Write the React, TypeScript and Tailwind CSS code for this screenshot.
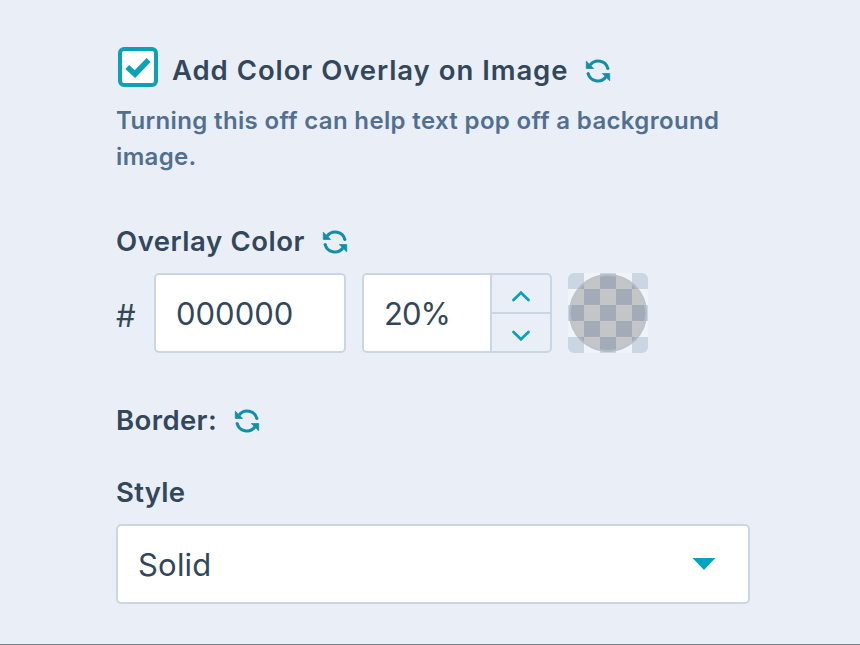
import React, { useState } from "react";

const RefreshIcon: React.FC = () => (
  <svg className="h-[26px] w-[26px] shrink-0 text-[#138fa5]" viewBox="0 0 26 26" fill="none">
    <path d="M5.2 7A10 10 0 0 1 22.9 10.6" stroke="currentColor" strokeWidth={3} />
    <path d="M20.8 19A10 10 0 0 1 3.1 15.4" stroke="currentColor" strokeWidth={3} />
    <circle cx="22.9" cy="10.4" r="1.5" fill="currentColor" />
    <circle cx="3.1" cy="15.6" r="1.5" fill="currentColor" />
    <path d="M1.3 3.2V10.4H8.6Z" fill="currentColor" stroke="currentColor" strokeWidth={0.8} strokeLinejoin="round" />
    <path d="M24.7 22.8V15.6H17.4Z" fill="currentColor" stroke="currentColor" strokeWidth={0.8} strokeLinejoin="round" />
  </svg>
);

interface FieldLabelProps {
  children: React.ReactNode;
  className?: string;
  resettable?: boolean;
}

const FieldLabel: React.FC<FieldLabelProps> = ({ children, className = "", resettable = true }) => (
  <div className={`flex h-9 items-center text-[27.5px] leading-9 font-semibold ${className}`}>
    <span className="tracking-[0.3px]">{children}</span>
    {resettable && (
      <button type="button" aria-label="Reset" className="mt-0.5 ml-[17px]">
        <RefreshIcon />
      </button>
    )}
  </div>
);

// Checkerboard swatch with the translucent overlay colour on top
const ColorSwatch: React.FC = () => (
  <div className="relative ml-4 h-20 w-20 overflow-hidden rounded-md">
    <div className="grid grid-cols-5">
      {Array.from({ length: 25 }, (_, i) => (
        <span key={i} className={`h-4 ${i % 2 === 0 ? "bg-[#cbd6e2]" : "bg-[#f0f4f9]"}`} />
      ))}
    </div>
    <div className="absolute inset-0 grid grid-cols-5 [clip-path:circle(39px)]">
      {Array.from({ length: 25 }, (_, i) => (
        <span key={i} className={`h-4 ${i % 2 === 0 ? "bg-[#a2abb7]" : "bg-[#c3c5c7]"}`} />
      ))}
    </div>
    <div className="absolute inset-px rounded-full border-2 border-[#b9c3ce]/70" />
  </div>
);

export default function App() {
  const [checked, setChecked] = useState(true);
  const [opacity, setOpacity] = useState(20);

  return (
    <div className="h-[645px] w-[860px] overflow-hidden border-b border-[#777f88] bg-[#eaeff7] pl-[116px] font-['Inter',sans-serif] text-[#33475b]">
      <div className="flex pt-[47px]">
        <button
          type="button"
          role="checkbox"
          aria-checked={checked}
          aria-label="Add Color Overlay on Image"
          onClick={() => setChecked(!checked)}
          className="ml-0.5 flex h-10 w-10 items-center justify-center rounded-[6px] border-4 border-[#0ba2b8] bg-white"
        >
          {checked && (
            <svg className="h-[22px] w-[26px] shrink-0" viewBox="0 0 26 22" fill="none">
              <path d="M2.2 11L10 18L23.6 4" stroke="#0ba2b8" strokeWidth={5.6} />
            </svg>
          )}
        </button>
        <FieldLabel className="mt-[5px] ml-[14px]">
          <span className="tracking-[0.9px] [word-spacing:0.3px]">Add Color Overlay on Image</span>
        </FieldLabel>
      </div>
      <p className="mt-[15px] w-[633px] text-[24px] leading-9 font-semibold tracking-[0.35px] text-[#516f90]">
        Turning this off can help text pop off a background image.
      </p>

      <FieldLabel className="mt-12">
        <span className="tracking-[0.5px] [word-spacing:0.5px]">Overlay Color</span>
      </FieldLabel>
      <div className="mt-[14px] flex h-20 items-center text-[31px]">
        <span className="w-[38px] pt-1.5 text-[31px]">#</span>
        <div className="flex h-20 w-48 items-center rounded-[5px] border-2 border-[#cbd6e2] bg-white pt-[3px] pl-5">
          000000
        </div>
        <div className="ml-4 flex h-20 w-[190px] overflow-hidden rounded-[5px] border-2 border-[#cbd6e2]">
          <div className="flex w-[126px] items-center bg-white pt-[3px] pl-5 tracking-[-1px]">{opacity}%</div>
          <div className="flex flex-1 flex-col border-l-2 border-[#cbd6e2]">
            <button
              type="button"
              aria-label="Increase opacity"
              onClick={() => setOpacity(Math.min(100, opacity + 1))}
              className="flex flex-1 items-center justify-center border-b-2 border-[#cbd6e2]"
            >
              <svg className="mt-1 h-3 w-5" viewBox="0 0 20 12" fill="none">
                <path d="M2.5 10L10 2.7L17.5 10" stroke="#0ba2b8" strokeWidth={2.8} strokeLinecap="round" />
              </svg>
            </button>
            <button
              type="button"
              aria-label="Decrease opacity"
              onClick={() => setOpacity(Math.max(0, opacity - 1))}
              className="flex flex-1 items-center justify-center"
            >
              <svg className="mt-1.5 h-3 w-5" viewBox="0 0 20 12" fill="none">
                <path d="M2.5 2L10 9.3L17.5 2" stroke="#0ba2b8" strokeWidth={2.8} strokeLinecap="round" />
              </svg>
            </button>
          </div>
        </div>
        <ColorSwatch />
      </div>

      <FieldLabel className="mt-[49px]">
        <span className="tracking-[0.4px]">Border:</span>
      </FieldLabel>
      <FieldLabel className="mt-9" resettable={false}>
        Style
      </FieldLabel>
      <button
        type="button"
        className="mt-[14px] flex h-20 w-[634px] items-center justify-between rounded-[5px] border-2 border-[#cbd6e2] bg-white pr-8 pl-5 text-[31px]"
      >
        <span className="pt-[3px] tracking-[0.2px]">Solid</span>
        <svg className="h-3 w-6" viewBox="0 0 24 12">
          <path d="M0.5 0H23.5L12 12Z" fill="#00a4bd" />
        </svg>
      </button>
    </div>
  );
}
